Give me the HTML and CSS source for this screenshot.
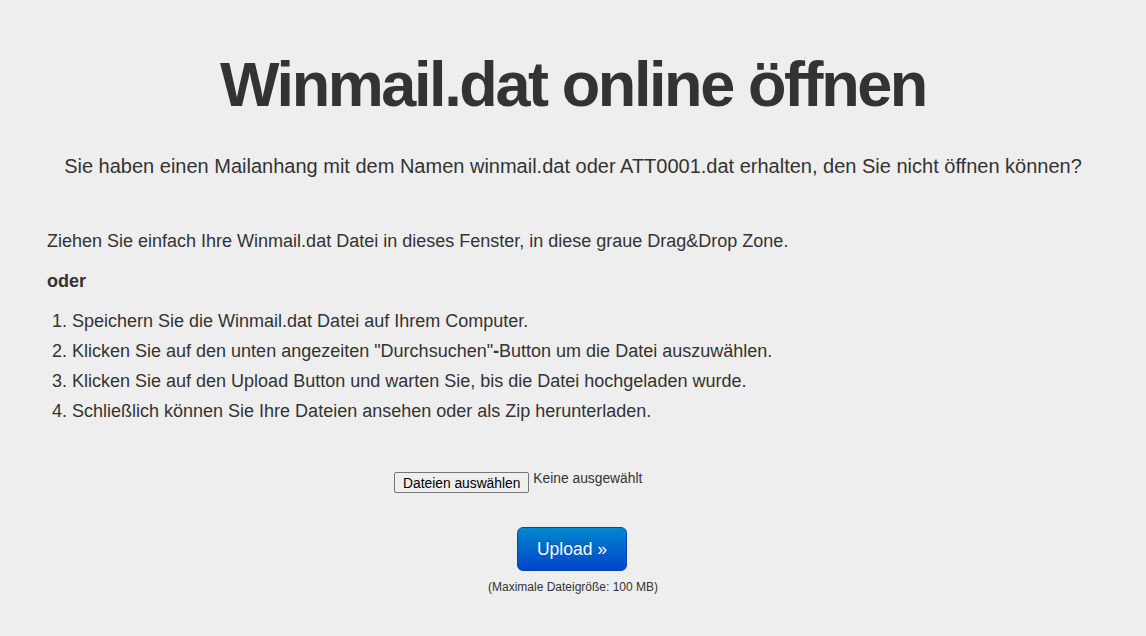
FILE: index.html
```html
<!DOCTYPE html>
<html lang="de">
<head>
<meta charset="utf-8">
<title>Winmail.dat online öffnen</title>
<link rel="stylesheet" href="styles.css">
</head>
<body>
<div class="page">
  <h1 class="title">Winmail.dat online öffnen</h1>
  <p class="lead">Sie haben einen Mailanhang mit dem Namen winmail.dat oder ATT0001.dat erhalten, den Sie nicht öffnen können?</p>
  <div class="content">
    <p class="text">Ziehen Sie einfach Ihre Winmail.dat Datei in dieses Fenster, in diese graue Drag&amp;Drop Zone.</p>
    <p class="text"><strong>oder</strong></p>
    <ol class="steps">
      <li>Speichern Sie die Winmail.dat Datei auf Ihrem Computer.</li>
      <li>Klicken Sie auf den unten angezeiten "Durchsuchen"<strong>-</strong>Button um die Datei auszuwählen.</li>
      <li>Klicken Sie auf den Upload Button und warten Sie, bis die Datei hochgeladen wurde.</li>
      <li>Schließlich können Sie Ihre Dateien ansehen oder als Zip herunterladen.</li>
    </ol>
  </div>
  <form class="upload">
    <div class="file-row">
      <div class="file-input">
        <span class="file-btn">Dateien auswählen</span>
        <span class="file-none">Keine ausgewählt</span>
      </div>
    </div>
    <div class="btn-row">
      <button type="button" class="btn-upload">Upload »</button>
    </div>
    <p class="hint">(Maximale Dateigröße: 100 MB)</p>
  </form>
</div>
</body>
</html>
```
FILE: styles.css
```css
html, body {
  margin: 0;
  padding: 0;
  background: #eeeeee;
}
body {
  font-family: "Liberation Sans", Arial, Helvetica, sans-serif;
  color: #333333;
  font-size: 18px;
}
.page {
  padding: 50px 47px 0;
}
.title {
  margin: 0;
  font-size: 63px;
  line-height: 69px;
  font-weight: bold;
  text-align: center;
  letter-spacing: -2.4px;
}
.lead {
  margin: 32px 0 0;
  font-size: 20px;
  line-height: 30px;
  text-align: center;
}
.content {
  margin-top: 45px;
}
.text {
  margin: 0 0 10px;
  line-height: 30px;
}
.steps {
  margin: 0;
  padding-left: 25px;
  line-height: 30px;
}
.upload {
  margin-top: 46px;
}
.file-row {
  display: flex;
  justify-content: center;
}
.file-input {
  width: 358px;
  display: flex;
  align-items: flex-start;
  gap: 4px;
  font-size: 13.8px;
}
.file-btn {
  display: inline-block;
  box-sizing: border-box;
  height: 21px;
  padding: 1px 8px 0;
  line-height: 19px;
  border: 1px solid #767676;
  border-radius: 2px;
  background: #efefef;
  color: #000;
  font-size: 13.8px;
}
.file-none {
  line-height: 13px;
}
.btn-row {
  display: flex;
  justify-content: center;
  margin-top: 34px;
}
.btn-upload {
  box-sizing: border-box;
  width: 110px;
  height: 44px;
  margin-left: -2px;
  border: 1px solid #0045b8;
  border-radius: 6px;
  background: linear-gradient(to bottom, #0088cc, #0044cc);
  color: #ffffff;
  font-family: "Liberation Sans", Arial, Helvetica, sans-serif;
  font-size: 17.5px;
  padding: 0;
  text-shadow: 0 -1px 0 rgba(0,0,0,0.25);
}
.hint {
  margin: 9px 0 0;
  font-size: 12px;
  line-height: 14px;
  text-align: center;
  color: #333333;
}
```
